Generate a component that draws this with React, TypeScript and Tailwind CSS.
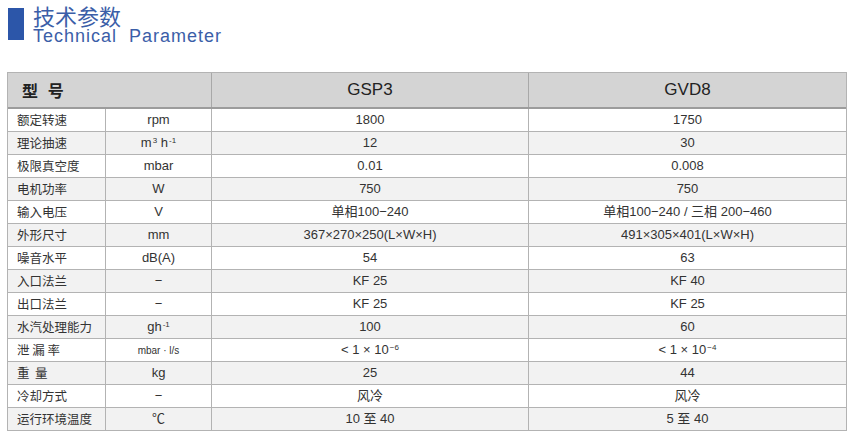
import React from "react";

type Row = {
  label: string;
  unit: React.ReactNode;
  a: React.ReactNode;
  b: React.ReactNode;
  unitSmall?: boolean;
};

const Sup = ({ children }: { children: React.ReactNode }) => (
  <sup className="text-[8px] top-[-0.5em] ml-[1px]">{children}</sup>
);

const rows: Row[] = [
  { label: "额定转速", unit: "rpm", a: "1800", b: "1750" },
  {
    label: "理论抽速",
    unit: (
      <>
        m<Sup>3</Sup> h<Sup>-1</Sup>
      </>
    ),
    a: "12",
    b: "30",
  },
  { label: "极限真空度", unit: "mbar", a: "0.01", b: "0.008" },
  { label: "电机功率", unit: "W", a: "750", b: "750" },
  { label: "输入电压", unit: "V", a: "单相100−240", b: "单相100−240 / 三相 200−460" },
  {
    label: "外形尺寸",
    unit: "mm",
    a: "367×270×250(L×W×H)",
    b: "491×305×401(L×W×H)",
  },
  { label: "噪音水平", unit: "dB(A)", a: "54", b: "63" },
  { label: "入口法兰", unit: "−", a: "KF 25", b: "KF 40" },
  { label: "出口法兰", unit: "−", a: "KF 25", b: "KF 25" },
  {
    label: "水汽处理能力",
    unit: (
      <>
        gh<Sup>-1</Sup>
      </>
    ),
    a: "100",
    b: "60",
  },
  {
    label: "泄 漏 率",
    unit: "mbar · l/s",
    unitSmall: true,
    a: (
      <>
        &lt; 1 × 10<Sup>−6</Sup>
      </>
    ),
    b: (
      <>
        &lt; 1 × 10<Sup>−4</Sup>
      </>
    ),
  },
  { label: "重  量", unit: "kg", a: "25", b: "44" },
  { label: "冷却方式", unit: "−", a: "风冷", b: "风冷" },
  { label: "运行环境温度", unit: "℃", a: "10 至 40", b: "5 至 40" },
];

export default function App() {
  return (
    <div
      className="w-[850px] h-[435px] bg-white overflow-hidden"
      style={{ fontFamily: '"Liberation Sans", "Noto Sans CJK SC", sans-serif' }}
    >
      {/* Title */}
      <div className="flex items-start pl-[8px] pt-[2px] gap-[9px] h-[47px]">
        <div className="w-[16px] h-[32px] mt-[6px] bg-[#2c56a9]" />
        <div className="flex flex-col text-[#3b5ea8]">
          <span
            className="text-[22px] leading-[26px]"
            style={{ fontFamily: '"Noto Sans CJK SC", sans-serif' }}
          >
            技术参数
          </span>
          <span className="text-[18px] leading-[16px] tracking-[1px] whitespace-pre">
            Technical  Parameter
          </span>
        </div>
      </div>

      {/* Table */}
      <div className="ml-[7px] mt-[25px] w-[840px] border-t border-l border-r border-[#b3b3b3] text-[#333]">
        <div className="grid grid-cols-[204px_317px_1fr] h-[36px] bg-[#d4d4d4] border-b-2 border-[#9c9c9c] text-[#222]">
          <div className="flex items-center pl-[14px] border-r border-[#a8a8a8]">
            <span
              className="text-[16px] font-bold tracking-[3px]"
              style={{ fontFamily: '"Noto Sans CJK SC", sans-serif' }}
            >
              型 号
            </span>
          </div>
          <div className="flex items-center justify-center border-r border-[#a8a8a8] text-[17px]">
            GSP3
          </div>
          <div className="flex items-center justify-center text-[17px]">GVD8</div>
        </div>
        {rows.map((r, i) => (
          <div
            key={i}
            className={`grid grid-cols-[98px_106px_317px_1fr] h-[23px] border-b border-[#b3b3b3] text-[13px] ${
              i % 2 === 1 ? "bg-[#f2f2f2]" : "bg-white"
            }`}
          >
            <div
              className="flex items-center pl-[9px] border-r border-[#b3b3b3] text-[12.5px] whitespace-pre"
              style={{ fontFamily: '"Noto Sans CJK SC", sans-serif' }}
            >
              {r.label}
            </div>
            <div
              className={`flex items-center justify-center border-r border-[#b3b3b3] ${
                r.unitSmall ? "text-[10px]" : "text-[13px]"
              }`}
            >
              <span>{r.unit}</span>
            </div>
            <div className="flex items-center justify-center border-r border-[#b3b3b3]">
              <span>{r.a}</span>
            </div>
            <div className="flex items-center justify-center">
              <span>{r.b}</span>
            </div>
          </div>
        ))}
      </div>
    </div>
  );
}
